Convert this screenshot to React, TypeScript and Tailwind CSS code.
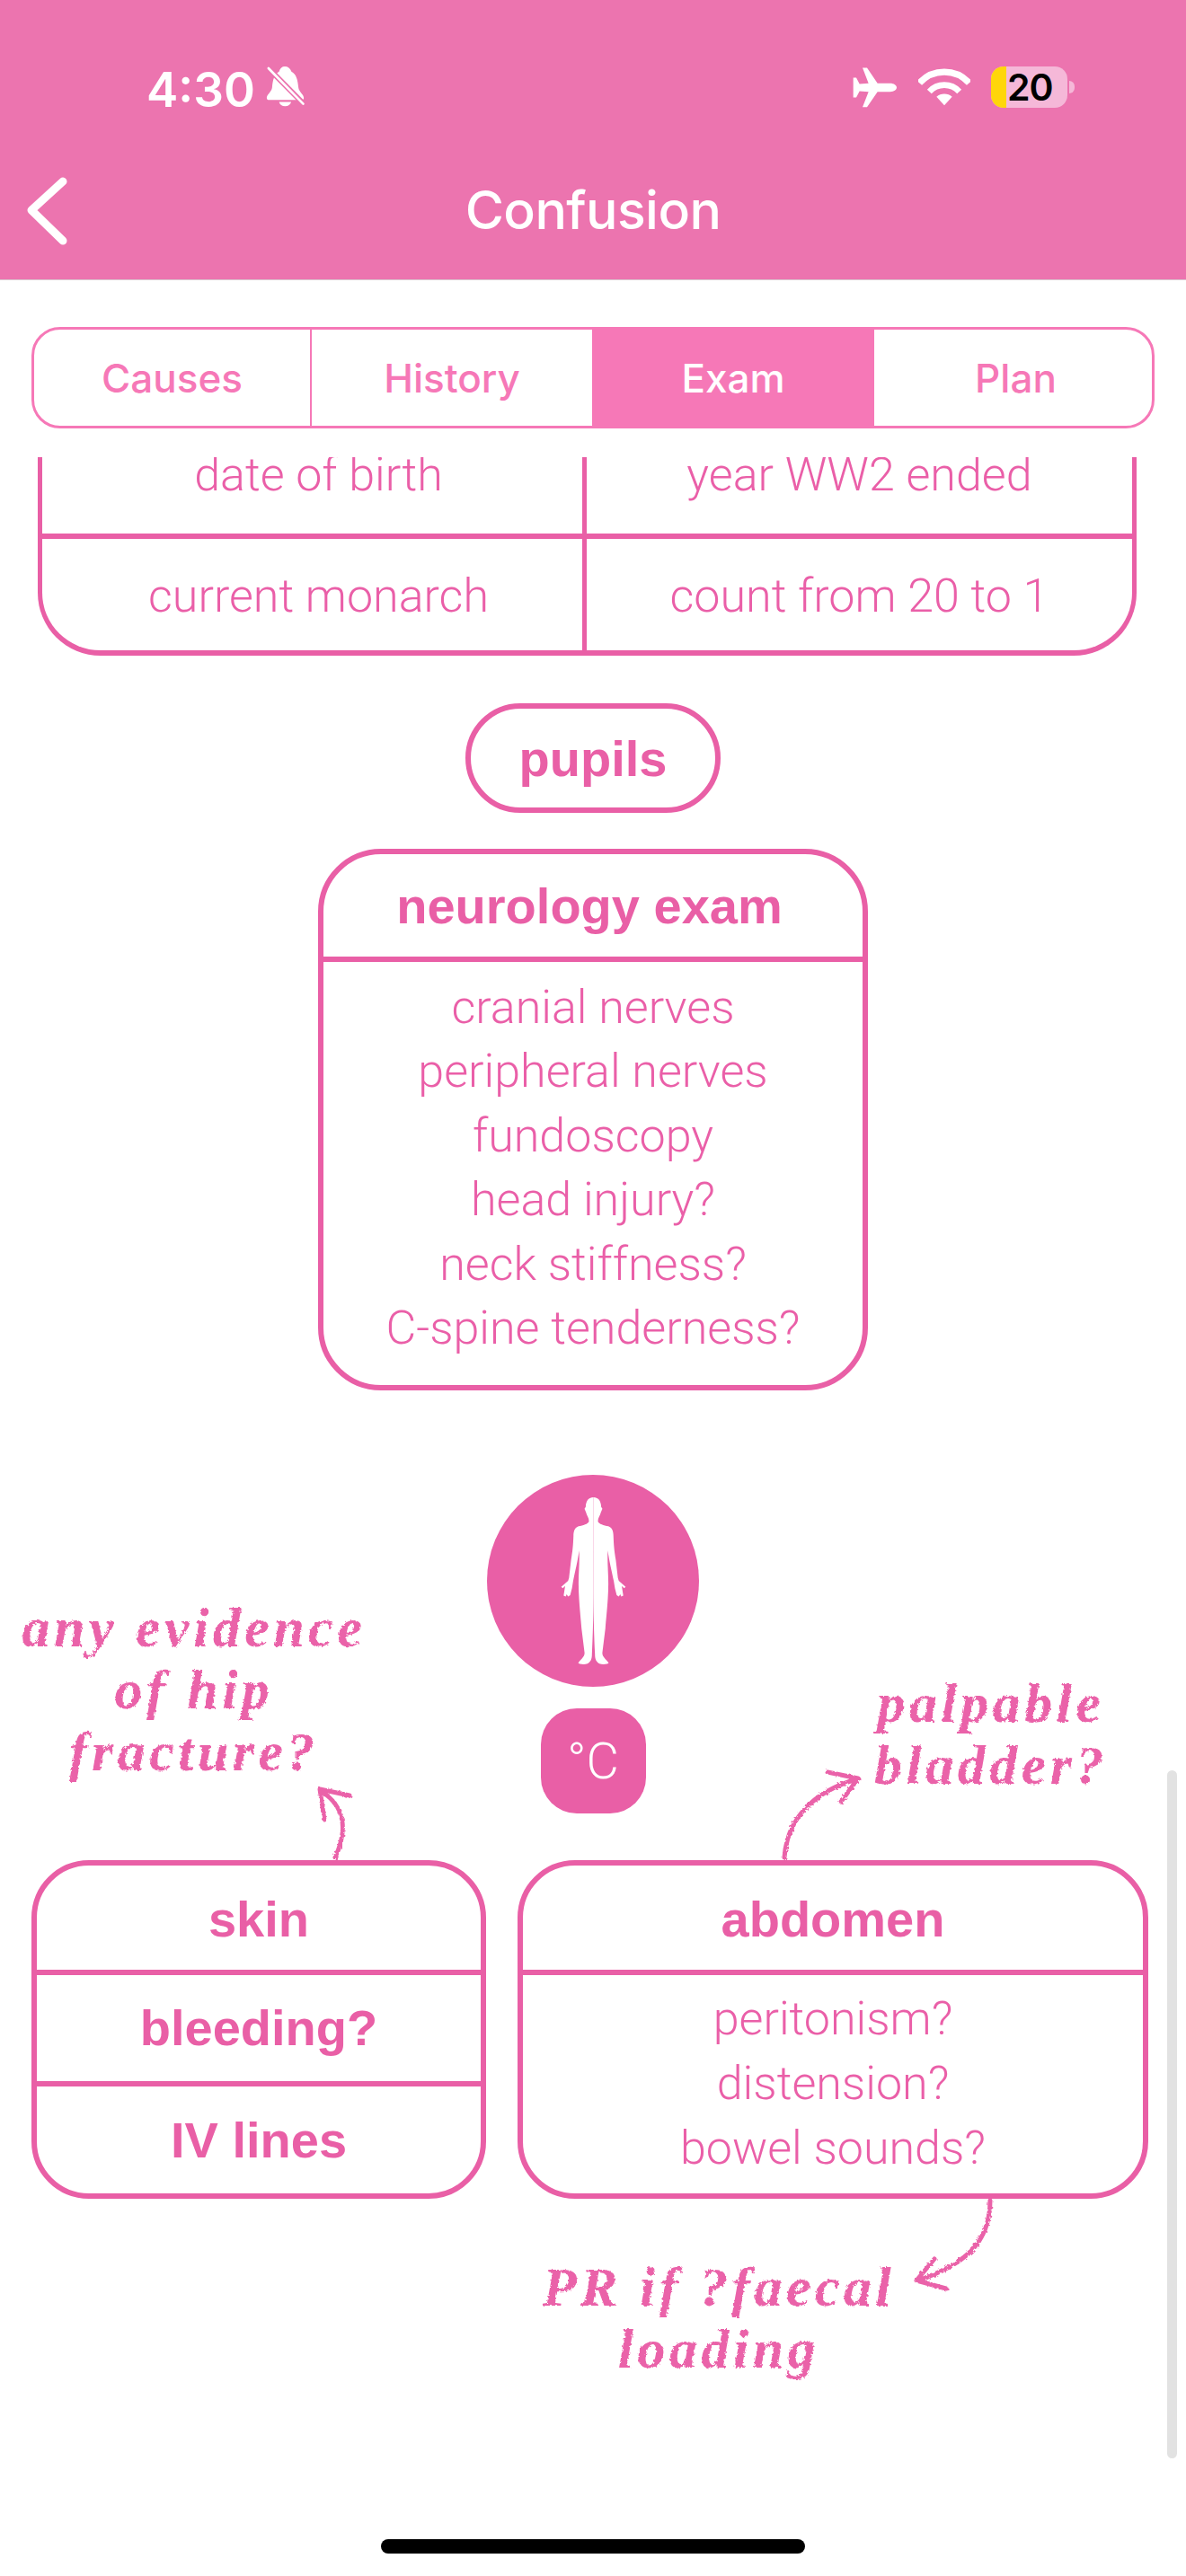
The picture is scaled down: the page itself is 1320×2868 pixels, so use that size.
function BellOff() {
  return (
    <svg viewBox="520 105 130 140" className="ml-[12px] h-[47px] w-[44px]">
      <path
        fill="#fff"
        d="M582 108c10 0 18 6 22 17 16 8 21 28 23 52 2 16 18 24 18 35 0 5-3 7-8 7H530c-5 0-8-2-8-7 0-11 16-19 18-35 2-24 7-44 23-52 3-11 10-17 19-17zM563 226h40c-2 9-10 14-20 14s-18-5-20-14z"
      />
      <path stroke="#ec74af" strokeWidth="18" d="M522 108l126 128" />
      <path stroke="#fff" strokeWidth="8" strokeLinecap="round" d="M528 114l115 118" />
    </svg>
  )
}

function Airplane() {
  return (
    <svg viewBox="80 78 150 134" className="h-[45px] w-[50px]">
      <path
        fill="#fff"
        d="M205 131h-42l-35-52h-15l20 52-30 2-11-21H82v66h10l11-21 30 2-20 51h15l35-51h42c13 0 22-7 22-14s-9-14-22-14z"
      />
    </svg>
  )
}

function Wifi() {
  return (
    <svg viewBox="298 76 174 126" className="ml-[23px] h-[42px] w-[58px]" fill="none">
      <path stroke="#fff" strokeWidth="22" d="M302 125a112 112 0 0 1 166 0" />
      <path stroke="#fff" strokeWidth="20" d="M335 154a68 68 0 0 1 100 0" />
      <path fill="#fff" d="M385 200l-26-29a40 40 0 0 1 52 0z" />
    </svg>
  )
}

function Battery() {
  return (
    <div className="ml-[23px] flex items-center">
      <div className="flex h-[46px] w-[85px] overflow-hidden rounded-[14px] bg-[#f5b8d8]">
        <div className="h-full w-[17px] bg-[#ffd60a]" />
        <span className="w-[60px] pl-[1px] text-left font-['Inter'] text-[41px] leading-[46px] font-semibold tracking-[-1px] text-black">
          20
        </span>
      </div>
      <div className="ml-[2px] h-[14px] w-[6px] rounded-r-full bg-[#f5b8d8]" />
    </div>
  )
}

function Body() {
  const half =
    'M540 200C525 200 515 210 514 232L510 238L515 250C518 262 525 268 525 280C522 290 505 293 490 297C478 302 473 312 473 330C472 360 470 380 465 410L458 470L455 480L432 500L437 505L445 497L440 530L447 533L450 525L455 533L462 528L468 505L472 480C478 450 488 410 492 378C494 420 490 450 490 490C490 540 497 600 500 640L510 720C512 735 495 745 489 755C490 760 510 762 520 758C530 752 535 745 535 725C538 660 540 600 540 510Z'
  return (
    <svg viewBox="430 198 220 564" className="h-[188px] w-[73px]" fill="#fff">
      <path d={half} />
      <path d={half} transform="translate(1080 0) scale(-1 1)" />
    </svg>
  )
}

const light = "font-['Roboto'] text-[52px] font-light text-[#ea5fa8]"
const bold = "font-['Liberation_Sans'] text-[56px] font-bold text-[#e95fa6]"
const note =
  "absolute -translate-x-1/2 text-center font-['Liberation_Serif'] text-[62px] leading-[69px] font-bold tracking-[4.5px] whitespace-pre text-[#ea62a9] italic [filter:url(#chalk)]"

export default function App() {
  return (
    <div className="relative flex h-[2868px] w-[1320px] flex-col overflow-hidden bg-white">
      {/* Header */}
      <header className="h-[312px] shrink-0 border-b border-[#d8c8d0] bg-[#ec74af] text-white">
        <div className="flex h-[197px] items-start pt-[73px] pl-[163px]">
          <span className="font-['Inter'] text-[53px] leading-[54px] font-semibold">4:30</span>
          <BellOff />
          <div className="ml-[609px] flex items-center pt-[1px]">
            <Airplane />
            <Wifi />
            <Battery />
          </div>
        </div>
        <div className="relative flex items-start justify-center">
          <svg viewBox="0 197 90 80" className="absolute top-0 left-0 h-[80px] w-[90px]" fill="none">
            <path stroke="#fff" strokeWidth="9" strokeLinecap="round" strokeLinejoin="round" d="M70 202L35 234L70 268" />
          </svg>
          <span className="mt-[2px] font-['Inter'] text-[59px] leading-[70px] font-medium tracking-[-0.6px]">
            Confusion
          </span>
        </div>
      </header>

      {/* Tabs */}
      <div className="mx-[35px] mt-[52px] grid h-[113px] shrink-0 grid-cols-[309px_312px_314px_1fr] overflow-hidden rounded-[32px] border-[3px] border-[#f678b7] font-['Inter'] text-[44px] font-medium text-[#f678b7]">
        <div className="flex items-center justify-center border-r-2 border-[#f678b7]">Causes</div>
        <div className="flex items-center justify-center">History</div>
        <div className="flex items-center justify-center bg-[#f678b7] text-white">Exam</div>
        <div className="flex items-center justify-center pl-[6px]">Plan</div>
      </div>

      {/* Scrolled content */}
      <div className="mt-[32px] flex min-h-0 flex-1 flex-col items-center overflow-hidden">
        <div className="-mt-[44px] ml-[42px] grid w-[1223px] shrink-0 grid-cols-[606px_1fr] self-start rounded-b-[70px] border-x-[5px] border-b-[6px] border-[#e95fa6]">
          <div className={`flex h-[135px] items-center justify-center border-r-[5px] border-b-[6px] border-[#e95fa6] pb-[2px] pl-[14px] ${light}`}>
            date of birth
          </div>
          <div className={`flex h-[135px] items-center justify-center border-b-[6px] border-[#e95fa6] pb-[2px] ${light}`}>
            year WW2 ended
          </div>
          <div className={`flex h-[124px] items-center justify-center border-r-[5px] border-[#e95fa6] pt-[4px] pl-[14px] ${light}`}>
            current monarch
          </div>
          <div className={`flex h-[124px] items-center justify-center pt-[4px] ${light}`}>count from 20 to 1</div>
        </div>

        <div className={`mt-[53px] flex h-[122px] w-[284px] shrink-0 items-center justify-center rounded-full border-[6px] border-[#e95fa6] pt-[2px] ${bold}`}>
          pupils
        </div>

        <div className="mt-[40px] flex h-[603px] w-[612px] shrink-0 flex-col rounded-[70px] border-[6px] border-[#e95fa6]">
          <div className={`flex h-[120px] items-center justify-center border-b-[6px] border-[#e95fa6] pt-[2px] pr-[8px] ${bold}`}>
            neurology exam
          </div>
          <div className={`flex flex-col items-center pt-[15px] leading-[71.4px] ${light}`}>
            <span>cranial nerves</span>
            <span>peripheral nerves</span>
            <span>fundoscopy</span>
            <span>head injury?</span>
            <span>neck stiffness?</span>
            <span>C-spine tenderness?</span>
          </div>
        </div>

        <div className="mt-[94px] flex h-[236px] w-[236px] shrink-0 items-center justify-center rounded-full bg-[#e95fa6]">
          <Body />
        </div>
        <div className="mt-[24px] flex h-[117px] w-[117px] shrink-0 items-center justify-center rounded-[40px] bg-[#e95fa6] font-['Roboto'] text-[56px] font-light text-white">
          °C
        </div>

        <div className="mt-[52px] flex w-full shrink-0 gap-[35px] pl-[35px]">
          <div className="flex h-[377px] w-[506px] flex-col rounded-[64px] border-[6px] border-[#e95fa6]">
            <div className={`flex h-[122px] items-center justify-center border-b-[6px] border-[#e95fa6] pt-[3px] ${bold}`}>skin</div>
            <div className={`flex h-[124px] items-center justify-center border-b-[6px] border-[#e95fa6] ${bold}`}>bleeding?</div>
            <div className={`flex flex-1 items-center justify-center ${bold}`}>IV lines</div>
          </div>
          <div className="flex h-[377px] w-[702px] flex-col rounded-[64px] border-[6px] border-[#e95fa6]">
            <div className={`flex h-[122px] items-center justify-center border-b-[6px] border-[#e95fa6] pt-[3px] ${bold}`}>abdomen</div>
            <div className={`flex flex-col items-center pt-[13px] leading-[72px] ${light}`}>
              <span>peritonism?</span>
              <span>distension?</span>
              <span>bowel sounds?</span>
            </div>
          </div>
        </div>
      </div>

      {/* Handwritten notes and arrows */}
      <svg viewBox="0 0 1320 2868" className="absolute inset-0 h-[2868px] w-[1320px]" fill="none" stroke="#ea62a9" strokeWidth="5" strokeLinecap="round" strokeLinejoin="round">
        <defs>
          <filter id="chalk" x="-5%" y="-5%" width="110%" height="110%">
            <feTurbulence type="fractalNoise" baseFrequency="0.35" numOctaves="2" seed="4" />
            <feDisplacementMap in="SourceGraphic" scale="4" />
          </filter>
        </defs>
        <g filter="url(#chalk)">
          <path d="M373 2068C386 2040 386 2012 357 1994M389 1999L356 1992L361 2026" />
          <path d="M873 2068C876 2025 905 1995 953 1981M921 1973L955 1980L936 2006" />
          <path d="M1102 2450C1102 2500 1070 2522 1022 2539M1040 2515L1020 2539L1053 2548" />
        </g>
      </svg>
      <div className={`${note} top-[1778px] left-[216px]`}>{'any evidence\nof hip\nfracture?'}</div>
      <div className={`${note} top-[1862px] left-[1103px]`}>{'palpable\nbladder?'}</div>
      <div className={`${note} top-[2512px] left-[800px]`}>{'PR if ?faecal\nloading'}</div>

      {/* Scrollbar and home indicator */}
      <div className="absolute top-[1971px] right-[10px] h-[766px] w-[11px] rounded-full bg-[#e2e2e2]" />
      <div className="absolute bottom-[25px] left-[424px] h-[16px] w-[472px] rounded-full bg-black" />
    </div>
  )
}
